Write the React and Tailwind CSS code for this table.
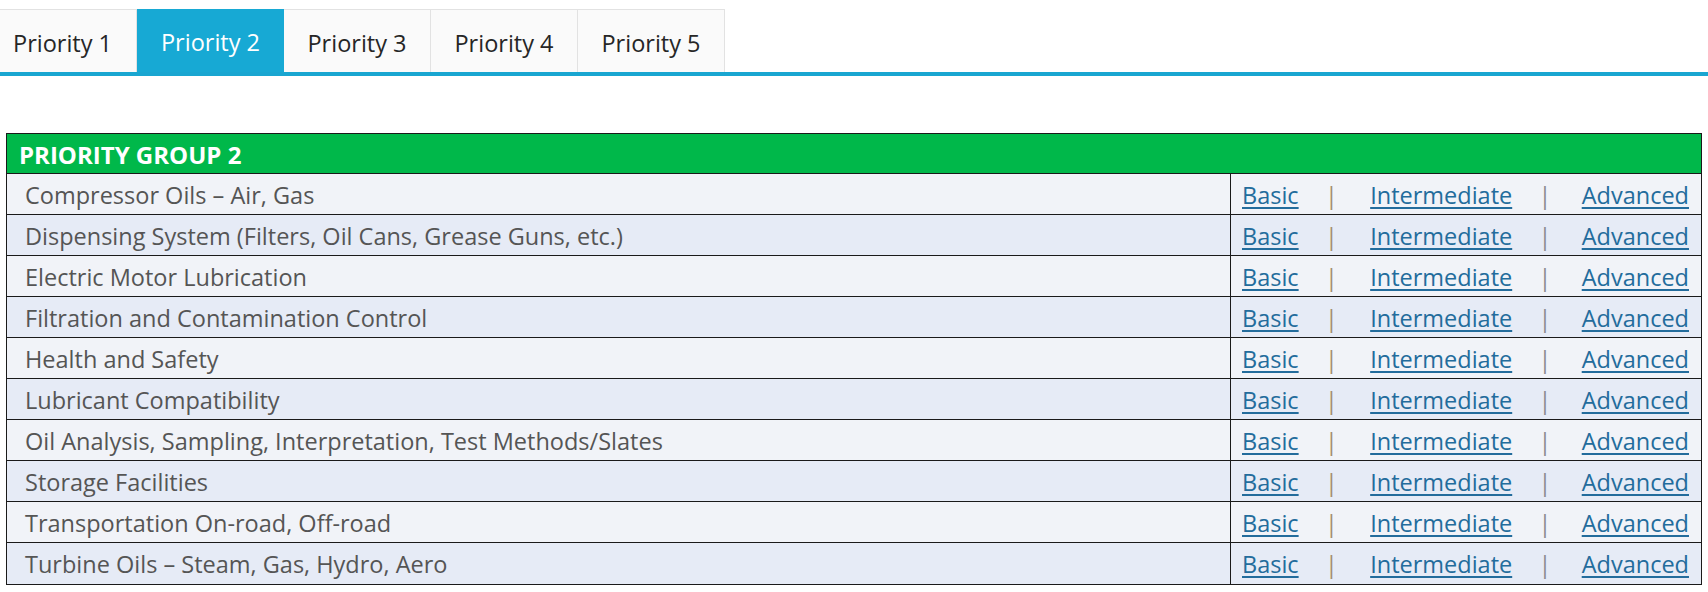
const tabs = ['Priority 1', 'Priority 2', 'Priority 3', 'Priority 4', 'Priority 5'];

const topics = [
  'Compressor Oils – Air, Gas',
  'Dispensing System (Filters, Oil Cans, Grease Guns, etc.)',
  'Electric Motor Lubrication',
  'Filtration and Contamination Control',
  'Health and Safety',
  'Lubricant Compatibility',
  'Oil Analysis, Sampling, Interpretation, Test Methods/Slates',
  'Storage Facilities',
  'Transportation On-road, Off-road',
  'Turbine Oils – Steam, Gas, Hydro, Aero',
];

function LevelLinks() {
  return (
    <div className="flex items-center justify-between pl-[11px] pr-[12px] pt-[3px]">
      <a href="#" className="text-[#236c9c] underline underline-offset-[3px]">Basic</a>
      <span className="text-[#a58e70] pr-[6px]">|</span>
      <a href="#" className="text-[#236c9c] underline underline-offset-[3px]">Intermediate</a>
      <span className="text-[#8a8a8e] pr-[4px]">|</span>
      <a href="#" className="text-[#236c9c] underline underline-offset-[3px]">Advanced</a>
    </div>
  );
}

export default function App() {
  const active = 1;

  return (
    <div className="bg-white w-[1708px] h-[592px] pt-[9px] font-['Open_Sans',sans-serif]">
      <div className="flex border-b-4 border-[#19a6d1]">
        {tabs.map((t, i) => (
          <div
            key={t}
            className={
              (i === 0 ? 'w-[137px] justify-start pl-[13px] ' : 'w-[147px] justify-center ') +
              (i === active
                ? 'h-[63px] pt-[5px] flex items-center bg-[#17a9d4] text-white text-[23.5px]'
                : 'h-[63px] pt-[5px] flex items-center bg-[#fafafa] border-t border-r border-[#e2e2e2] text-[#262626] text-[23.5px]')
            }
          >
            {t}
          </div>
        ))}
      </div>

      <div className="mt-[57px] ml-[6px] w-[1696px] border border-[#1a1a1a]">
        <div className="h-[40px] pt-[2px] bg-[#00b84a] flex items-center pl-[12px] text-white font-bold text-[24px] border-b border-[#1a1a1a]">
          PRIORITY GROUP 2
        </div>
        {topics.map((t, i) => (
          <div
            key={t}
            className={
              'grid grid-cols-[1224px_1fr] h-[41px] text-[23.5px] ' +
              (i % 2 === 0 ? 'bg-[#f1f3f8]' : 'bg-[#e6ebf6]') +
              (i < topics.length - 1 ? ' border-b border-[#1a1a1a]' : '')
            }
          >
            <div className="flex items-center pl-[18px] pt-[3px] text-[#555555] border-r border-[#1a1a1a]">{t}</div>
            <LevelLinks />
          </div>
        ))}
      </div>
    </div>
  );
}
